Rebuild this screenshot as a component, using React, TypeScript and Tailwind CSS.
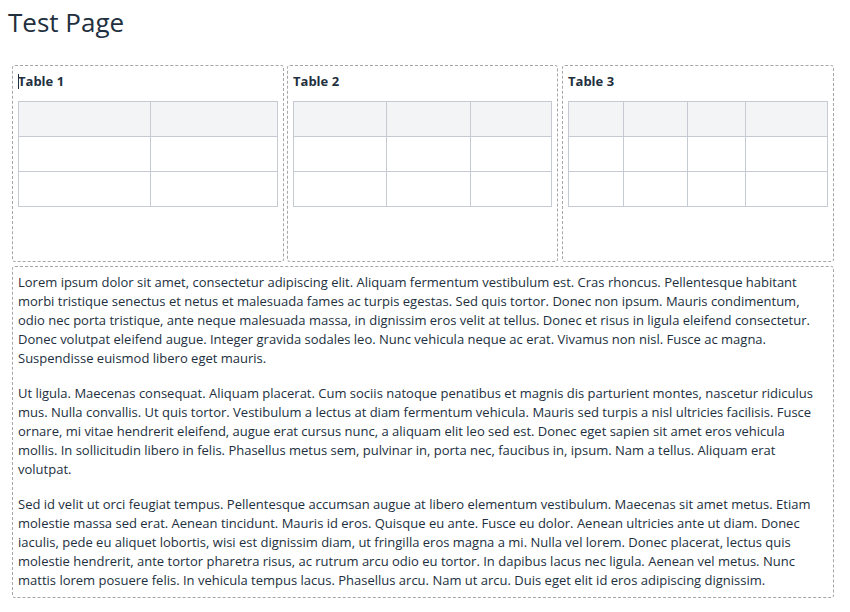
const paragraphs = [
  [
    "Lorem ipsum dolor sit amet, consectetur adipiscing elit. Aliquam fermentum vestibulum est. Cras rhoncus. Pellentesque habitant",
    "morbi tristique senectus et netus et malesuada fames ac turpis egestas. Sed quis tortor. Donec non ipsum. Mauris condimentum,",
    "odio nec porta tristique, ante neque malesuada massa, in dignissim eros velit at tellus. Donec et risus in ligula eleifend consectetur.",
    "Donec volutpat eleifend augue. Integer gravida sodales leo. Nunc vehicula neque ac erat. Vivamus non nisl. Fusce ac magna.",
    "Suspendisse euismod libero eget mauris.",
  ],
  [
    "Ut ligula. Maecenas consequat. Aliquam placerat. Cum sociis natoque penatibus et magnis dis parturient montes, nascetur ridiculus",
    "mus. Nulla convallis. Ut quis tortor. Vestibulum a lectus at diam fermentum vehicula. Mauris sed turpis a nisl ultricies facilisis. Fusce",
    "ornare, mi vitae hendrerit eleifend, augue erat cursus nunc, a aliquam elit leo sed est. Donec eget sapien sit amet eros vehicula",
    "mollis. In sollicitudin libero in felis. Phasellus metus sem, pulvinar in, porta nec, faucibus in, ipsum. Nam a tellus. Aliquam erat",
    "volutpat.",
  ],
  [
    "Sed id velit ut orci feugiat tempus. Pellentesque accumsan augue at libero elementum vestibulum. Maecenas sit amet metus. Etiam",
    "molestie massa sed erat. Aenean tincidunt. Mauris id eros. Quisque eu ante. Fusce eu dolor. Aenean ultricies ante ut diam. Donec",
    "iaculis, pede eu aliquet lobortis, wisi est dignissim diam, ut fringilla eros magna a mi. Nulla vel lorem. Donec placerat, lectus quis",
    "molestie hendrerit, ante tortor pharetra risus, ac rutrum arcu odio eu tortor. In dapibus lacus nec ligula. Aenean vel metus. Nunc",
    "mattis lorem posuere felis. In vehicula tempus lacus. Phasellus arcu. Nam ut arcu. Duis eget elit id eros adipiscing dignissim.",
  ],
];

const tables = [
  { title: "Table 1", width: "w-[272px]", cols: [132, 127], caret: true },
  { title: "Table 2", width: "w-[271px] ml-[3px]", cols: [93, 84, 81] },
  { title: "Table 3", width: "w-[272px] ml-[4px]", cols: [55, 64, 58, 82] },
];

function TableCard({ title, width, cols, caret }: { title: string; width: string; cols: number[]; caret?: boolean }) {
  return (
    <div className={width + " h-[197px] border border-dashed border-[#a6a6a6] rounded-[3px] px-[5px] pt-[6px]"}>
      <div className="relative text-[13px] font-bold leading-[19px] text-[#222f3e]">
        {caret && <span className="absolute left-0 top-[2px] h-[15px] w-px bg-[#222f3e]" />}
        {title}
      </div>
      <table className="mt-[10px] w-full border-collapse table-fixed">
        <colgroup>
          {cols.map((w, i) => (
            <col key={i} style={{ width: w }} />
          ))}
        </colgroup>
        <tbody>
          {[0, 1, 2].map((r) => (
            <tr key={r} className={r === 0 ? "bg-[#f3f4f6]" : ""}>
              {cols.map((_, c) => (
                <td key={c} className="h-[35px] border border-[#c5cad3] p-0" />
              ))}
            </tr>
          ))}
        </tbody>
      </table>
    </div>
  );
}

export default function App() {
  return (
    <div className="min-h-[612px] bg-white text-[#222f3e] font-['Open_Sans','Noto_Sans',sans-serif]">
      <h1 className="pl-[8px] pt-[5px] text-[26px] leading-[34px] font-normal">Test Page</h1>

      <div className="mt-[26px] ml-[12px] w-[822px] flex flex-col gap-[4px]">
        <div className="flex">
          {tables.map((t) => (
            <TableCard key={t.title} {...t} />
          ))}
        </div>

        <div className="border border-dashed border-[#a6a6a6] rounded-[3px] px-[5px] pt-[6px] pb-[7px]">
          {paragraphs.map((lines, i) => (
            <p key={i} className={"text-[13px] leading-[19px] whitespace-nowrap " + (i > 0 ? "mt-[16px]" : "")}>
              {lines.map((l, j) => (
                <span key={j} className="block">
                  {l}
                </span>
              ))}
            </p>
          ))}
        </div>
      </div>
    </div>
  );
}
